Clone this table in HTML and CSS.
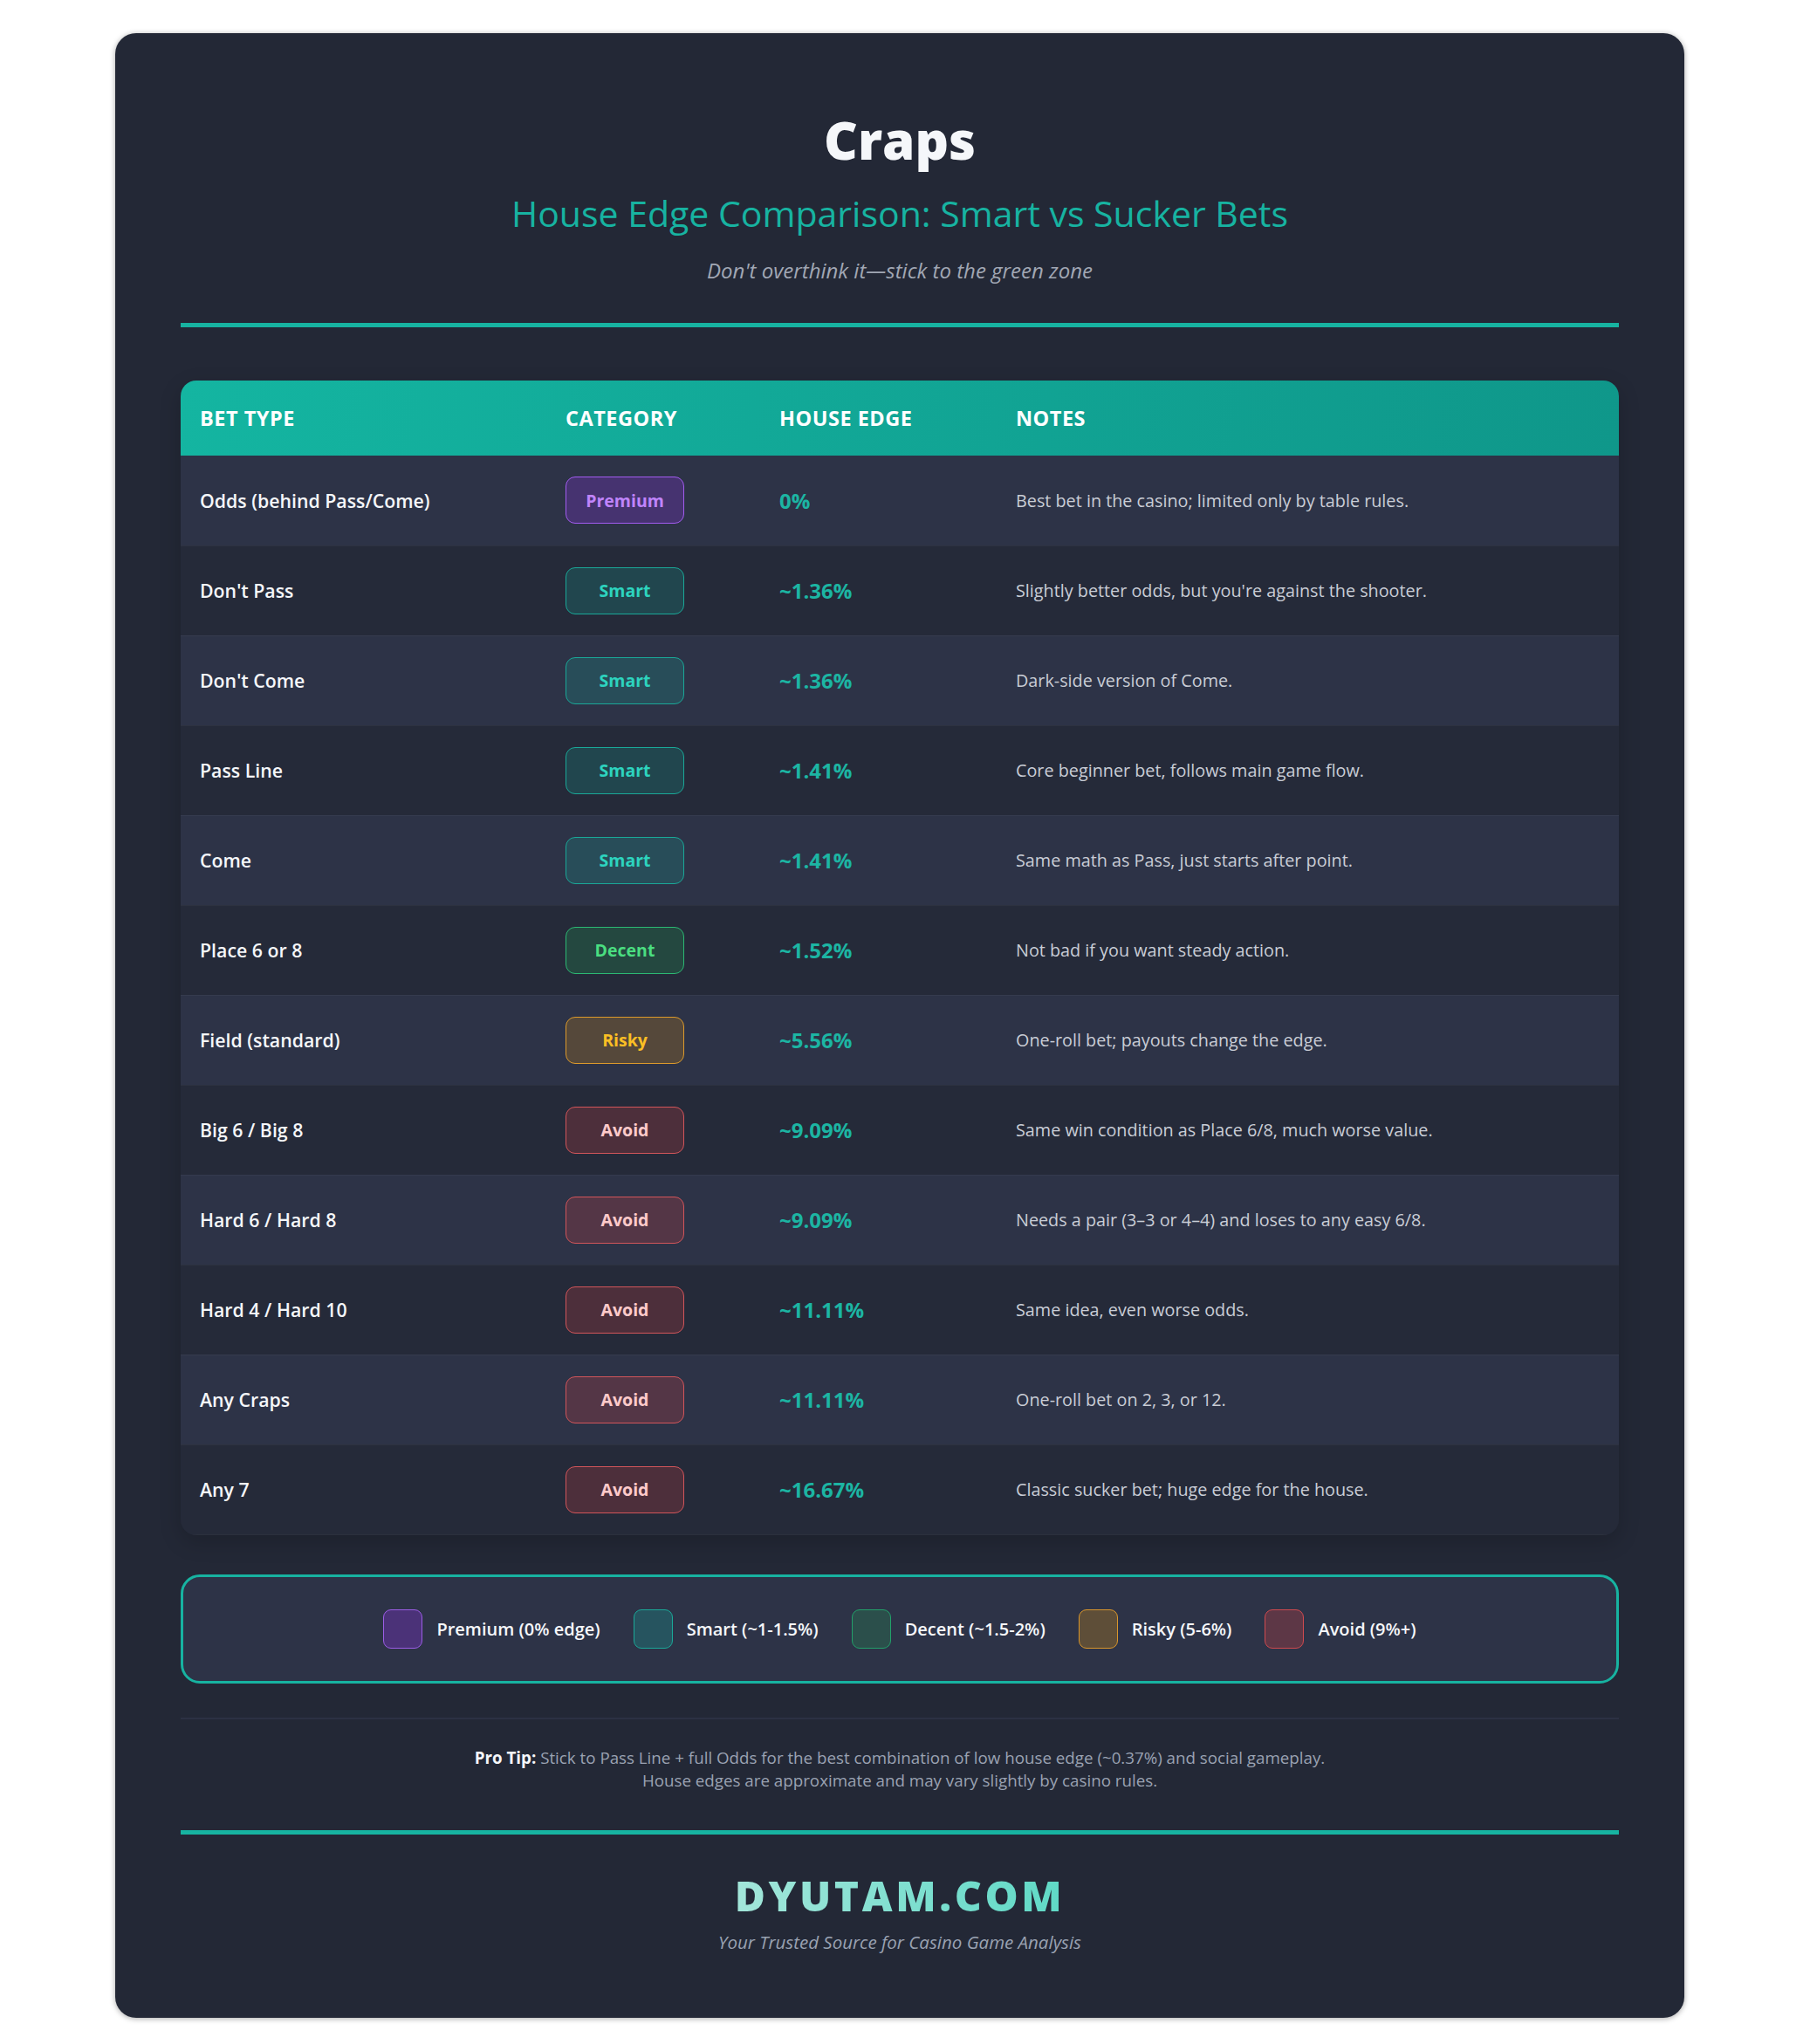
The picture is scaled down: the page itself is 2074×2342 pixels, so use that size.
FILE: index.html
```html
<!DOCTYPE html>
<html lang="en">
<head>
<meta charset="utf-8">
<title>Craps – House Edge Comparison</title>
<link rel="stylesheet" href="styles.css">
</head>
<body>
<div class="page">
  <main class="card">
    <header class="hero">
      <h1 class="title">Craps</h1>
      <h2 class="subtitle">House Edge Comparison: Smart vs Sucker Bets</h2>
      <p class="tagline">Don't overthink it—stick to the green zone</p>
    </header>
    <div class="rule"></div>

    <div class="table-wrap">
      <table class="bets">
        <thead>
          <tr>
            <th class="c-bet">Bet Type</th>
            <th class="c-cat">Category</th>
            <th class="c-edge">House Edge</th>
            <th class="c-notes">Notes</th>
          </tr>
        </thead>
        <tbody>
          <tr><td class="bet">Odds (behind Pass/Come)</td><td><span class="badge premium">Premium</span></td><td class="edge">0%</td><td class="note">Best bet in the casino; limited only by table rules.</td></tr>
          <tr><td class="bet">Don't Pass</td><td><span class="badge smart">Smart</span></td><td class="edge">~1.36%</td><td class="note">Slightly better odds, but you're against the shooter.</td></tr>
          <tr><td class="bet">Don't Come</td><td><span class="badge smart">Smart</span></td><td class="edge">~1.36%</td><td class="note">Dark-side version of Come.</td></tr>
          <tr><td class="bet">Pass Line</td><td><span class="badge smart">Smart</span></td><td class="edge">~1.41%</td><td class="note">Core beginner bet, follows main game flow.</td></tr>
          <tr><td class="bet">Come</td><td><span class="badge smart">Smart</span></td><td class="edge">~1.41%</td><td class="note">Same math as Pass, just starts after point.</td></tr>
          <tr><td class="bet">Place 6 or 8</td><td><span class="badge decent">Decent</span></td><td class="edge">~1.52%</td><td class="note">Not bad if you want steady action.</td></tr>
          <tr><td class="bet">Field (standard)</td><td><span class="badge risky">Risky</span></td><td class="edge">~5.56%</td><td class="note">One-roll bet; payouts change the edge.</td></tr>
          <tr><td class="bet">Big 6 / Big 8</td><td><span class="badge avoid">Avoid</span></td><td class="edge">~9.09%</td><td class="note">Same win condition as Place 6/8, much worse value.</td></tr>
          <tr><td class="bet">Hard 6 / Hard 8</td><td><span class="badge avoid">Avoid</span></td><td class="edge">~9.09%</td><td class="note">Needs a pair (3–3 or 4–4) and loses to any easy 6/8.</td></tr>
          <tr><td class="bet">Hard 4 / Hard 10</td><td><span class="badge avoid">Avoid</span></td><td class="edge">~11.11%</td><td class="note">Same idea, even worse odds.</td></tr>
          <tr><td class="bet">Any Craps</td><td><span class="badge avoid">Avoid</span></td><td class="edge">~11.11%</td><td class="note">One-roll bet on 2, 3, or 12.</td></tr>
          <tr><td class="bet">Any 7</td><td><span class="badge avoid">Avoid</span></td><td class="edge">~16.67%</td><td class="note">Classic sucker bet; huge edge for the house.</td></tr>
        </tbody>
      </table>
    </div>

    <div class="legend">
      <div class="legend-item"><span class="swatch premium"></span><span>Premium (0% edge)</span></div>
      <div class="legend-item"><span class="swatch smart"></span><span>Smart (~1-1.5%)</span></div>
      <div class="legend-item"><span class="swatch decent"></span><span>Decent (~1.5-2%)</span></div>
      <div class="legend-item"><span class="swatch risky"></span><span>Risky (5-6%)</span></div>
      <div class="legend-item"><span class="swatch avoid"></span><span>Avoid (9%+)</span></div>
    </div>

    <div class="tip">
      <p><strong>Pro Tip:</strong> Stick to Pass Line + full Odds for the best combination of low house edge (~0.37%) and social gameplay.</p>
      <p>House edges are approximate and may vary slightly by casino rules.</p>
    </div>

    <footer class="brand">
      <div class="brand-name">DYUTAM.COM</div>
      <div class="brand-tag">Your Trusted Source for Casino Game Analysis</div>
    </footer>
  </main>
</div>
</body>
</html>
```

FILE: styles.css
```css
* { box-sizing: border-box; }

html, body {
  margin: 0;
  padding: 0;
  background: #ffffff;
}

body {
  font-family: "Open Sans", "Noto Sans", "Liberation Sans", sans-serif;
  color: #f1f5f9;
}

.page {
  padding: 38px 0 31px 132px;
}

.card {
  width: 1798px;
  background: #232836;
  border-radius: 24px;
  padding: 75px 75px 73px;
  box-shadow: 0 1px 6px rgba(0, 0, 0, 0.35);
}

/* ---------- hero ---------- */
.hero {
  text-align: center;
}

.title {
  margin: 11px 0 0;
  font-size: 60px;
  line-height: 72px;
  font-weight: 800;
  color: #f5f7fa;
}

.subtitle {
  margin: 24px 0 0;
  font-size: 41px;
  line-height: 48px;
  font-weight: 500;
  color: #17b3a1;
}

.tagline {
  margin: 26px 0 0;
  font-size: 24px;
  line-height: 32px;
  font-style: italic;
  color: #a1a7b4;
}

.rule {
  margin-top: 44px;
  height: 5px;
  background: #17b3a1;
}

/* ---------- table ---------- */
.table-wrap {
  margin-top: 61px;
  border-radius: 18px;
  overflow: hidden;
  box-shadow: 0 8px 24px rgba(0, 0, 0, 0.18);
}

.bets {
  width: 100%;
  border-collapse: collapse;
  table-layout: fixed;
}

.c-bet { width: 419px; }
.c-cat { width: 245px; }
.c-edge { width: 271px; }

.bets thead tr {
  background: linear-gradient(100deg, #14b5a1 0%, #0f978a 100%);
}

.bets th {
  height: 86px;
  padding: 0 22px;
  text-align: left;
  font-size: 23.5px;
  font-weight: 700;
  letter-spacing: 0.5px;
  text-transform: uppercase;
  color: #ffffff;
}

.bets td {
  height: 103px;
  padding: 0 22px;
  vertical-align: middle;
  border-bottom: 1px solid rgba(255, 255, 255, 0.04);
}

.bets tbody tr:nth-child(odd) { background: #2d3347; }
.bets tbody tr:nth-child(even) { background: #252a39; }

.bet {
  font-size: 21.3px;
  font-weight: 600;
  color: #f5f7fa;
}

.edge {
  font-size: 24px;
  font-weight: 700;
  color: #1cb5a3;
}

.note {
  font-size: 19.8px;
  color: #c9cdd6;
}

.badge {
  display: inline-flex;
  align-items: center;
  justify-content: center;
  width: 136px;
  height: 54px;
  border-radius: 11px;
  border: 1.5px solid;
  font-size: 19.5px;
  font-weight: 700;
}

.badge.premium { background: rgba(147, 51, 234, 0.25); border-color: #a25cf0; color: #c084fc; }
.badge.smart   { background: rgba(20, 184, 166, 0.2);  border-color: #1aa898; color: #2dd4bf; }
.badge.decent  { background: rgba(34, 197, 94, 0.2);   border-color: #2cb873; color: #4ade80; }
.badge.risky   { background: rgba(245, 158, 11, 0.2);  border-color: #dc9a2c; color: #fbbf24; }
.badge.avoid   { background: rgba(239, 68, 68, 0.2);   border-color: #d2555a; color: #fecaca; }

/* ---------- legend ---------- */
.legend {
  margin-top: 45px;
  height: 125px;
  display: flex;
  align-items: center;
  justify-content: center;
  gap: 38px;
  background: #2d3347;
  border: 3px solid #17b3a1;
  border-radius: 22px;
}

.legend-item {
  display: flex;
  align-items: center;
  gap: 16px;
  font-size: 20px;
  font-weight: 600;
  color: #f5f7fa;
}

.swatch {
  width: 45px;
  height: 45px;
  border-radius: 9px;
  border: 1.5px solid;
}

.swatch.premium { background: rgba(147, 51, 234, 0.3); border-color: #9b5de5; }
.swatch.smart   { background: rgba(20, 184, 166, 0.25); border-color: #1aa898; }
.swatch.decent  { background: rgba(34, 197, 94, 0.2);  border-color: #22a06a; }
.swatch.risky   { background: rgba(245, 158, 11, 0.25); border-color: #d9962c; }
.swatch.avoid   { background: rgba(239, 68, 68, 0.25);  border-color: #cf4a4f; }

/* ---------- tip ---------- */
.tip {
  margin-top: 39px;
  padding-top: 31px;
  border-top: 2px solid #2c3143;
  text-align: center;
  font-size: 18.75px;
  line-height: 26px;
  color: #9aa2b2;
}

.tip p { margin: 0; }

.tip strong {
  color: #f5f7fa;
  font-weight: 700;
}

/* ---------- brand ---------- */
.brand {
  margin-top: 44px;
  border-top: 5px solid #17b3a1;
  padding-top: 41px;
  text-align: center;
}

.brand-name {
  display: inline-block;
  font-size: 48px;
  line-height: 58px;
  font-weight: 800;
  letter-spacing: 3.6px;
  background: linear-gradient(90deg, #a3e6da 0%, #5fd9c6 100%);
  -webkit-background-clip: text;
  background-clip: text;
  color: transparent;
}

.brand-tag {
  margin-top: 11px;
  font-size: 20.5px;
  line-height: 27px;
  font-style: italic;
  color: #9aa2b2;
}
```
